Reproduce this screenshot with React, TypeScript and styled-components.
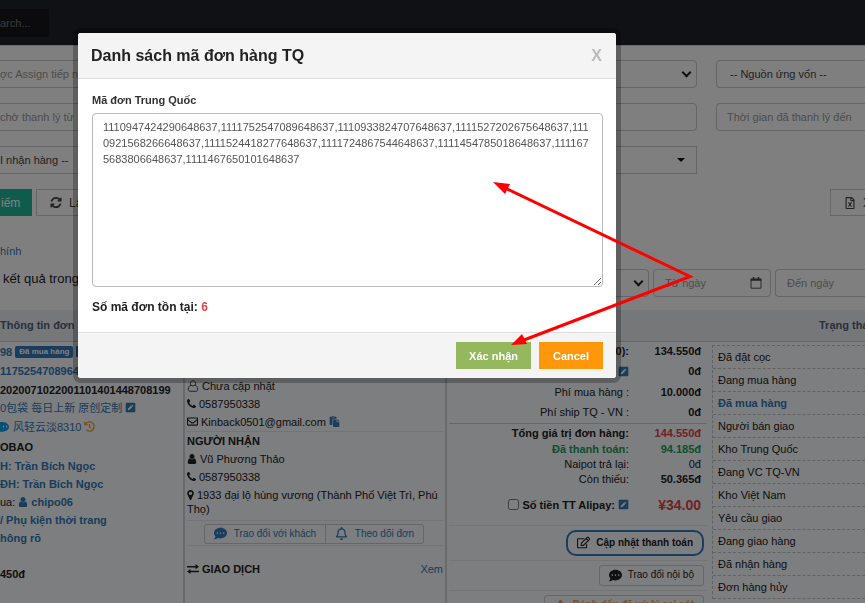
import React from "react";
import styled, { createGlobalStyle, css } from "styled-components";
import {
  FaRegEnvelope,
  FaRegBell,
  FaRegEdit,
  FaPenSquare,
  FaPaste,
  FaHistory,
  FaRegFileExcel,
  FaExclamationTriangle,
  FaCommentDots,
} from "react-icons/fa";

const GlobalStyle = createGlobalStyle`
  *, *::before, *::after { box-sizing: border-box; }
  html, body { margin: 0; height: 100%; overflow: hidden; }
  body {
    background: #fff;
    color: #222;
    font: 11px/18px "Liberation Sans", "Noto Sans CJK SC", Arial, sans-serif;
  }
  button, input, select, textarea { font: inherit; color: inherit; margin: 0; }
  a { color: #337ab7; text-decoration: none; }
  svg { flex: none; }
`;

/* ---------- icons ---------- */

const Glyph = styled.svg<{ $size?: number }>`
  width: ${(p) => p.$size ?? 11}px;
  height: ${(p) => p.$size ?? 11}px;
  fill: currentColor;
`;

const RefreshIcon = () => (
  <Glyph $size={12} viewBox="0 0 1536 1664" aria-hidden>
    <path d="M1511 928q0 5-1 7-64 268-268 434.500t-478 166.500q-146 0-282.500-55t-243.500-157l-129 129q-19 19-45 19t-45-19-19-45v-448q0-26 19-45t45-19h448q26 0 45 19t19 45-19 45l-137 137q71 66 161 102t187 36q134 0 250-65t186-179q11-17 53-117 8-23 30-23h192q13 0 22.500 9.500t9.500 22.500zm25-800v448q0 26-19 45t-45 19h-448q-26 0-45-19t-19-45 19-45l138-138q-148-137-349-137-134 0-250 65t-186 179q-11 17-53 117-8 23-30 23h-199q-13 0-22.500-9.500t-9.500-22.500v-7q65-268 270-434.500t480-166.500q146 0 284 55.500t245 156.500l130-129q19-19 45-19t45 19 19 45z" />
  </Glyph>
);

const userPath =
  "M1536 1399q0 109-62.500 187t-150.500 78h-854q-88 0-150.500-78t-62.500-187q0-85 8.500-160.500t31.500-152 58.500-131 94-89 134.500-34.500q131 128 313 128t313-128q76 0 134.500 34.500t94 89 58.500 131 31.500 152 8.500 160.500zm-256-887q0 159-112.500 271.500t-271.500 112.500-271.500-112.500-112.500-271.500 112.500-271.500 271.500-112.500 271.500 112.500 112.500 271.500z";

const UserIcon = () => (
  <Glyph $size={10} viewBox="256 128 1280 1536" aria-hidden>
    <path d={userPath} />
  </Glyph>
);

const UserOutlineIcon = () => (
  <Glyph $size={12} viewBox="0 0 11 12" aria-hidden>
    <path
      d="M5.500 .7a2.700 2.700 0 0 1 2 4.500c1.700.4 2.700 2 2.700 4 0 1.200-.7 2.100-1.700 2.100h-6C1.500 11.300.8 10.400.8 9.200c0-2 1-3.600 2.700-4a2.700 2.700 0 0 1 2-4.500zM3.500 5.200c1.200 1 2.800 1 4 0"
      fill="none"
      stroke="currentColor"
      strokeWidth=".8"
    />
  </Glyph>
);

const PhoneIcon = () => (
  <Glyph $size={9} viewBox="192 128 1408 1408" aria-hidden>
    <path d="M1600 1240q0 27-10 70.500t-21 68.500q-21 50-122 106-94 51-186 51-27 0-53-3.500t-57.500-12.500-47-14.500-55.500-20.500-49-18q-98-35-175-83-127-79-264-216t-216-264q-48-77-83-175-3-9-18-49t-20.500-55.500-14.500-47-12.500-57.500-3.500-53q0-92 51-186 56-101 106-122 25-11 68.500-21t70.500-10q14 0 21 3 18 6 53 76 11 19 30 54t35 63.500 31 53.500q3 4 17.500 25t21.500 35.500 7 28.500q0 20-28.500 50t-62 55-62 53-28.500 46q0 9 5 22.500t8.500 20.500 14 24 11.500 19q76 137 174 235t235 174q2 1 19 11.500t24 14 20.500 8.500 22.500 5q18 0 46-28.500t53-62 55-62 50-28.500q14 0 28.500 7t35.500 21.500 25 17.500q25 15 53.500 31t63.500 35 54 30q70 35 76 53 3 7 3 21z" />
  </Glyph>
);

const MarkerSvg = styled(Glyph)`
  width: 7px;
  height: 10px;
  margin-right: 3px;
  vertical-align: -1px;
`;

const MarkerIcon = () => (
  <MarkerSvg viewBox="384 128 1024 1536" aria-hidden>
    <path d="M1152 640q0-106-75-181t-181-75-181 75-75 181 75 181 181 75 181-75 75-181zm256 0q0 109-33 179l-364 774q-16 33-47.500 52t-67.500 19-67.500-19-46.500-52l-365-774q-33-70-33-179 0-212 150-362t362-150 362 150 150 362z" />
  </MarkerSvg>
);

const ExchangeIcon = () => (
  <Glyph $size={12} viewBox="0 0 12 12" aria-hidden>
    <path d="M0 3h8.500V1L12 3.700 8.500 6.300V4.400H0zM12 7.800H3.500V6L0 8.500 3.500 11V9.200H12z" />
  </Glyph>
);

const WangwangIcon = () => (
  <Glyph $size={10} viewBox="0 0 10 10" aria-hidden>
    <path d="M0 0c5-.6 9 1.700 9 5 0 3.200-4 5-9 4.700z" fill="#0aa0e8" />
    <path d="M3.500 3.500v2M6.500 3.500v2" stroke="#fff" />
  </Glyph>
);

const CalendarSvg = styled(Glyph)`
  margin-right: 8px;
`;

const CalendarIcon = () => (
  <CalendarSvg $size={12} viewBox="0 0 12 12" aria-hidden>
    <path d="M1 2.500h10v8.700H1z" fill="none" stroke="currentColor" strokeWidth=".9" />
    <path d="M.6 1.500h10.800v2.200H.6zM2.800 0h1.500v2H2.800zM7.700 0h1.500v2H7.700z" />
  </CalendarSvg>
);

const Chevron = styled.span`
  width: 7px;
  height: 7px;
  margin: 0 6px 4px 0;
  border: solid #222;
  border-width: 0 2px 2px 0;
  transform: rotate(45deg);
`;

const Caret = styled.span`
  margin-right: 11px;
  border: 4px solid transparent;
  border-top-color: #111;
  border-bottom-width: 0;
`;

/* ---------- page ---------- */

const Page = styled.div`
  min-height: 100vh;
`;

const TopBar = styled.header`
  display: flex;
  align-items: flex-start;
  height: 45px;
  padding-top: 9px;
  background: #202229;
`;

const SearchBox = styled.input`
  width: 49px;
  height: 28px;
  padding: 0;
  border: 0;
  background: #16171c;
  font-size: 11px;
  &::placeholder { color: #777; opacity: 1; }
`;

const Filters = styled.form`
  display: grid;
  grid-template-columns: 1fr 1fr 149px;
  gap: 15px 19px;
  padding-top: 14px;
  border-top: 1px solid #d4d4d4;
`;

type Cut = "left" | "right" | undefined;

const Field = styled.div<{ $cut?: Cut; $square?: boolean; $w?: number }>`
  display: flex;
  align-items: center;
  height: 28px;
  ${(p) => p.$w && css`width: ${p.$w}px;`}
  border: 1px solid #ccc;
  border-radius: ${(p) => (p.$square ? 0 : 4)}px;
  background: #fff;
  color: #444;
  ${(p) => p.$cut === "left" && css`border-left: 0; border-radius: 0 4px 4px 0;`}
  ${(p) => p.$cut === "right" && css`border-right: 0; border-radius: 4px 0 0 4px;`}
`;

const controlText = css<{ $pad?: number }>`
  flex: 1;
  min-width: 0;
  width: 100%;
  height: 26px;
  padding: 0 0 0 ${(p) => p.$pad ?? 0}px;
  border: 0;
  background: none;
  outline: 0;
`;

const TextControl = styled.input<{ $pad?: number }>`
  ${controlText}
  &::placeholder { color: #999; opacity: 1; }
`;

const SelectControl = styled.select<{ $pad?: number }>`
  ${controlText}
  appearance: none;
  color: #444;
`;

const Actions = styled.div`
  display: flex;
  gap: 4px;
  padding-top: 15px;
`;

const ActionButton = styled.button<{ $primary?: boolean; $end?: boolean }>`
  display: flex;
  align-items: center;
  gap: 7px;
  width: ${(p) => (p.$primary ? 32 : p.$end ? 35 : 90)}px;
  height: 27px;
  padding: 0 0 0 ${(p) => (p.$primary ? 0 : 13)}px;
  overflow: hidden;
  white-space: nowrap;
  border: 1px solid #ccc;
  background: #fff;
  color: #444;
  ${(p) => p.$primary && css`border-color: #1fb89b; background: #1fb89b; color: #fff;`}
  ${(p) => p.$end && css`margin-left: auto; border-right: 0;`}
  font-size: 12px;
`;

const TabLine = styled.nav`
  padding-top: 26px;
`;

const ResultLine = styled.div`
  display: flex;
  align-items: center;
  gap: 4px;
  padding: 9px 0 13px;
`;

const ResultText = styled.span`
  flex: 1;
  padding-left: 3px;
  margin-bottom: 8px;
  font-size: 13px;
`;

/* ---------- orders table ---------- */

const Orders = styled.table`
  width: 100%;
  table-layout: fixed;
  border-collapse: collapse;
  background: #fafcff;
`;

const HeadCell = styled.th<{ $indent?: number }>`
  height: 31px;
  padding: 0 0 0 ${(p) => p.$indent ?? 0}px;
  background: #eaeef3;
  border-bottom: 1px solid #ccc;
  color: #53627c;
  text-align: left;
  white-space: nowrap;
  overflow: hidden;
`;

const Cell = styled.td<{ $pad: string; $line?: boolean }>`
  padding: ${(p) => p.$pad};
  vertical-align: top;
  ${(p) => p.$line && css`border-right: 2px solid #d2d4d8;`}
`;

const Line = styled.div<{ $bold?: boolean; $link?: boolean; $h?: number }>`
  display: flex;
  align-items: center;
  gap: 3px;
  height: ${(p) => p.$h ?? 18}px;
  white-space: nowrap;
  font-weight: ${(p) => (p.$bold ? 700 : 400)};
  color: ${(p) => (p.$link ? "#337ab7" : "inherit")};
`;

const Badge = styled.span`
  padding: 0 4px;
  border-radius: 2px;
  background: #337ab7;
  color: #fff;
  font: bold 8px/12px "Liberation Sans", sans-serif;
`;

const Copy = styled.span`
  width: 10px;
  height: 11px;
  background: #337ab7;
`;

const Orange = styled(FaHistory)`
  color: #f0a040;
`;

const Blue = styled.span`
  display: inline-flex;
  color: #337ab7;
`;

const Rule = styled.hr<{ $strong?: boolean }>`
  height: 1px;
  margin: 0;
  border: 0;
  background: ${(p) => (p.$strong ? "#d9cdc5" : "#e6e8eb")};
`;

const Address = styled.address`
  padding: 2px 0 4px;
  font-style: normal;
  line-height: 14px;
`;

const ButtonPair = styled.div`
  display: flex;
  margin: 3px 19px 1px 17px;
  border: 1px solid #ccc;
  border-radius: 3px;
`;

const PairButton = styled.button`
  display: flex;
  align-items: center;
  justify-content: center;
  gap: 7px;
  height: 18px;
  padding: 0 8px;
  flex: auto;
  border: 0;
  background: none;
  color: #337ab7;
  font-size: 10px;
  white-space: nowrap;
  & + & { border-left: 1px solid #ccc; }
  svg { font-size: 13px; }
`;

const Section = styled.div`
  display: flex;
  justify-content: space-between;
  padding-top: 14px;
`;

const Amount = styled.div<{ $h: number; $bold?: boolean; $tone?: string }>`
  display: grid;
  grid-template-columns: 1fr 72px;
  align-items: center;
  height: ${(p) => p.$h}px;
  padding-right: 6px;
  text-align: right;
  white-space: nowrap;
  font-weight: ${(p) => (p.$bold ? 700 : 400)};
  color: ${(p) => p.$tone ?? "inherit"};
`;

const Label = styled.span`
  display: flex;
  align-items: center;
  justify-content: flex-end;
  gap: 3px;
`;

const Value = styled.span<{ $bold?: boolean; $tone?: string; $big?: boolean }>`
  font-weight: ${(p) => (p.$bold ? 700 : "inherit")};
  color: ${(p) => p.$tone ?? "inherit"};
  font-size: ${(p) => (p.$big ? 14 : 11)}px;
`;

const Check = styled.input`
  width: 11px;
  height: 11px;
`;

const AlipayLabel = styled.label`
  display: flex;
  align-items: center;
  gap: 4px;
  font-weight: 700;
`;

const SideButton = styled.button<{ $kind: "pill" | "plain" | "warn" }>`
  display: flex;
  align-items: center;
  gap: 6px;
  margin: 4px 3px 4px auto;
  height: 21px;
  padding: 0 9px;
  border: 1px solid #ccc;
  border-radius: 3px;
  background: none;
  font-size: 10px;
  white-space: nowrap;
  svg { font-size: 13px; }
  ${(p) => p.$kind === "pill" && css`
    height: 26px;
    border: 2px solid #337ab7;
    border-radius: 10px;
    font-weight: 700;
  `}
  ${(p) => p.$kind === "warn" && css`color: #f39c34; font-weight: 700;`}
`;

const Statuses = styled.ol`
  margin: 0;
  padding: 0;
  list-style: none;
  border: dashed #c4c4c4;
  border-width: 1px 0 0 1px;
`;

const Status = styled.li<{ $active?: boolean }>`
  height: 23px;
  padding-left: 5px;
  border-bottom: 1px dashed #c4c4c4;
  line-height: 23px;
  ${(p) => p.$active && css`color: #337ab7; font-weight: 700;`}
`;

/* ---------- modal ---------- */

const Backdrop = styled.div`
  position: fixed;
  inset: 0;
  display: flex;
  align-items: flex-start;
  padding: 33px 249px 0 78px;
  background: rgba(0, 0, 0, 0.5);
`;

const Dialog = styled.section`
  flex: 1;
  border-radius: 3px;
  background: #fff;
  box-shadow: 0 0 0 5px rgba(0, 0, 0, 0.25);
  overflow: hidden;
`;

const DialogHead = styled.header`
  display: flex;
  align-items: center;
  justify-content: space-between;
  height: 46px;
  padding: 0 14px 0 13px;
  background: #f4f4f4;
  border-bottom: 1px solid #ddd;
`;

const Title = styled.h2`
  margin: 0;
  font-size: 16px;
  color: #222;
`;

const CloseButton = styled.button`
  padding: 0;
  border: 0;
  background: none;
  color: #bbb;
  font-size: 16px;
  font-weight: 700;
`;

const DialogBody = styled.div`
  padding: 12px 13px 16px 14px;
`;

const CodesLabel = styled.label`
  display: block;
  margin-bottom: 4px;
  font-weight: 700;
  color: #333;
`;

const Codes = styled.textarea`
  display: block;
  width: 100%;
  height: 174px;
  padding: 5px 10px;
  border: 1px solid #bbb;
  border-radius: 4px;
  color: #555;
  line-height: 16px;
  word-break: break-all;
  outline: 0;
`;

const Found = styled.p`
  margin: 11px 0 0;
  font-size: 12px;
  font-weight: 700;
`;

const Count = styled.span`
  color: #e04545;
`;

const DialogFoot = styled.footer`
  display: flex;
  justify-content: flex-end;
  gap: 8px;
  padding: 9px 13px;
  background: #f4f4f4;
  border-top: 1px solid #ddd;
`;

const FootButton = styled.button<{ $bg: string }>`
  min-width: 64px;
  height: 27px;
  padding: 0 13px;
  border: 0;
  background: ${(p) => p.$bg};
  color: #fff;
  font-weight: 700;
`;

const Arrows = styled.svg`
  position: fixed;
  top: 0;
  left: 0;
  width: 865px;
  height: 603px;
  pointer-events: none;
`;

const statuses = [
  "Đã đặt cọc",
  "Đang mua hàng",
  "Đã mua hàng",
  "Người bán giao",
  "Kho Trung Quốc",
  "Đang VC TQ-VN",
  "Kho Việt Nam",
  "Yêu cầu giao",
  "Đang giao hàng",
  "Đã nhận hàng",
  "Đơn hàng hủy",
];

const codes =
  "1110947424290648637,1111752547089648637,1110933824707648637,1111527202675648637,1110921568266648637,1111524418277648637,1111724867544648637,1111454785018648637,1111675683806648637,1111467650101648637";

export default function App() {
  return (
    <>
      <GlobalStyle />
      <Page>
        <TopBar>
          <SearchBox aria-label="Search" placeholder="arch..." />
        </TopBar>
        <Filters>
          <Field $cut="left">
            <TextControl aria-label="Assign" placeholder="ợc Assign tiếp nhận" />
          </Field>
          <Field>
            <SelectControl aria-label="Người mua" />
            <Chevron />
          </Field>
          <Field $cut="right">
            <SelectControl aria-label="Nguồn ứng vốn" $pad={13}>
              <option>-- Nguồn ứng vốn --</option>
            </SelectControl>
          </Field>
          <Field $cut="left">
            <TextControl aria-label="Thanh lý từ" placeholder="chờ thanh lý từ" />
          </Field>
          <Field>
            <TextControl aria-label="Thời gian" />
          </Field>
          <Field $cut="right">
            <TextControl aria-label="Thanh lý đến" placeholder="Thời gian đã thanh lý đến" $pad={10} />
          </Field>
          <Field $cut="left">
            <SelectControl aria-label="Kho nhận hàng">
              <option>I nhận hàng --</option>
            </SelectControl>
          </Field>
          <Field $square>
            <SelectControl aria-label="Kho" />
            <Caret />
          </Field>
        </Filters>
        <Actions>
          <ActionButton $primary>iếm</ActionButton>
          <ActionButton>
            <RefreshIcon />
            Làm lại
          </ActionButton>
          <ActionButton $end>
            <FaRegFileExcel />
            Xuất
          </ActionButton>
        </Actions>
        <TabLine>
          <a href="#chinh">hính</a>
        </TabLine>
        <ResultLine>
          <ResultText>kết quả trong</ResultText>
          <Field $w={120}>
            <SelectControl aria-label="Loại ngày" />
            <Chevron />
          </Field>
          <Field $w={118}>
            <TextControl aria-label="Từ ngày" placeholder="Từ ngày" $pad={11} />
            <CalendarIcon />
          </Field>
          <Field $cut="right" $w={90}>
            <TextControl aria-label="Đến ngày" placeholder="Đến ngày" $pad={11} />
          </Field>
        </ResultLine>
        <Orders>
          <colgroup>
            <col width="184" />
            <col width="262" />
            <col />
            <col width="158" />
          </colgroup>
          <thead>
            <tr>
              <HeadCell>Thông tin đơn hàng</HeadCell>
              <HeadCell />
              <HeadCell />
              <HeadCell $indent={112}>Trạng thái</HeadCell>
            </tr>
          </thead>
          <tbody>
            <tr>
              <Cell $pad="1px 0 0" $line>
                <Line>
                  <Blue><b>98</b></Blue>
                  <Badge>Đã mua hàng</Badge>
                  <Copy />
                </Line>
                <Line $bold $link $h={20}>1175254708964</Line>
                <Line $bold>2020071022001101401448708199</Line>
                <Line $link>
                  0包袋 每日上新 原创定制 <FaPenSquare />
                </Line>
                <Line $link $h={20}>
                  <WangwangIcon />
                  风轻云淡8310 <Orange />
                </Line>
                <Line $bold $h={20}>OBAO</Line>
                <Line $bold $link>H: Trần Bích Ngọc</Line>
                <Line $bold $link>ĐH: Trần Bích Ngọc</Line>
                <Line>
                  ua:
                  <Blue><UserIcon /></Blue>
                  <a href="#chipo06"><b>chipo06</b></a>
                </Line>
                <Line $bold $link>/ Phụ kiện thời trang</Line>
                <Line $bold $link>hông rõ</Line>
                <Line />
                <Line $bold>450đ</Line>
              </Cell>
              <Cell $pad="35px 2px 0 2px" $line>
                <Line><UserOutlineIcon />Chưa cập nhật</Line>
                <Line><PhoneIcon />0587950338</Line>
                <Line>
                  <FaRegEnvelope />
                  Kinback0501@gmail.com
                  <Blue><FaPaste /></Blue>
                </Line>
                <Rule />
                <Line $bold>NGƯỜI NHẬN</Line>
                <Line><UserIcon />Vũ Phương Thảo</Line>
                <Line><PhoneIcon />0587950338</Line>
                <Address>
                  <MarkerIcon />
                  1933 đại lộ hùng vương (Thành Phố Việt Trì, Phú Thọ)
                </Address>
                <Rule />
                <ButtonPair>
                  <PairButton><FaCommentDots />Trao đổi với khách</PairButton>
                  <PairButton><FaRegBell />Theo dõi đơn</PairButton>
                </ButtonPair>
                <Rule />
                <Section>
                  <Line $bold><ExchangeIcon />GIAO DỊCH</Line>
                  <a href="#xem">Xem</a>
                </Section>
              </Cell>
              <Cell $pad="0 0 0 2px">
                <Amount $h={19} $bold><span>0):</span><Value>134.550đ</Value></Amount>
                <Amount $h={21} $bold>
                  <Label><Blue><FaPenSquare /></Blue></Label>
                  <Value>0đ</Value>
                </Amount>
                <Amount $h={20}><span>Phí mua hàng :</span><Value $bold>10.000đ</Value></Amount>
                <Amount $h={21}><span>Phí ship TQ - VN :</span><Value $bold>0đ</Value></Amount>
                <Rule $strong />
                <Amount $h={16} $bold><span>Tổng giá trị đơn hàng:</span><Value $tone="#e04545">144.550đ</Value></Amount>
                <Amount $h={15} $bold $tone="#18a05a"><span>Đã thanh toán:</span><Value>94.185đ</Value></Amount>
                <Amount $h={15}><span>Naipot trả lại:</span><Value>0đ</Value></Amount>
                <Amount $h={15}><span>Còn thiếu:</span><Value $bold>50.365đ</Value></Amount>
                <Amount $h={40}>
                  <Label>
                    <AlipayLabel>
                      <Check type="checkbox" />
                      Số tiền TT Alipay:
                    </AlipayLabel>
                    <Blue><FaPenSquare /></Blue>
                  </Label>
                  <Value $bold $big $tone="#e04545">¥34.00</Value>
                </Amount>
                <Rule />
                <SideButton $kind="pill"><FaRegEdit />Cập nhật thanh toán</SideButton>
                <Rule />
                <SideButton $kind="plain"><FaCommentDots />Trao đổi nội bộ</SideButton>
                <Rule />
                <SideButton $kind="warn"><FaExclamationTriangle />Đánh dấu đã xử lý sai sót</SideButton>
              </Cell>
              <Cell $pad="3px 0 0 5px">
                <Statuses>
                  {statuses.map((s, i) => (
                    <Status key={s} $active={i === 2}>{s}</Status>
                  ))}
                </Statuses>
              </Cell>
            </tr>
          </tbody>
        </Orders>
      </Page>
      <Backdrop>
        <Dialog role="dialog" aria-modal="true" aria-labelledby="dialog-title">
          <DialogHead>
            <Title id="dialog-title">Danh sách mã đơn hàng TQ</Title>
            <CloseButton aria-label="Close">X</CloseButton>
          </DialogHead>
          <DialogBody>
            <CodesLabel htmlFor="codes">Mã đơn Trung Quốc</CodesLabel>
            <Codes id="codes" defaultValue={codes} spellCheck={false} />
            <Found>Số mã đơn tồn tại: <Count>6</Count></Found>
          </DialogBody>
          <DialogFoot>
            <FootButton $bg="#95b75d">Xác nhận</FootButton>
            <FootButton $bg="#fe970a">Cancel</FootButton>
          </DialogFoot>
        </Dialog>
      </Backdrop>
      <Arrows viewBox="0 0 865 603" aria-hidden>
        <path d="M505 188 690 276.500 524 340" fill="none" stroke="#f00" strokeWidth="3" />
        <path d="M493 182 510 184 505 194z M511 345 522 334 527 344z" fill="#f00" />
      </Arrows>
    </>
  );
}
